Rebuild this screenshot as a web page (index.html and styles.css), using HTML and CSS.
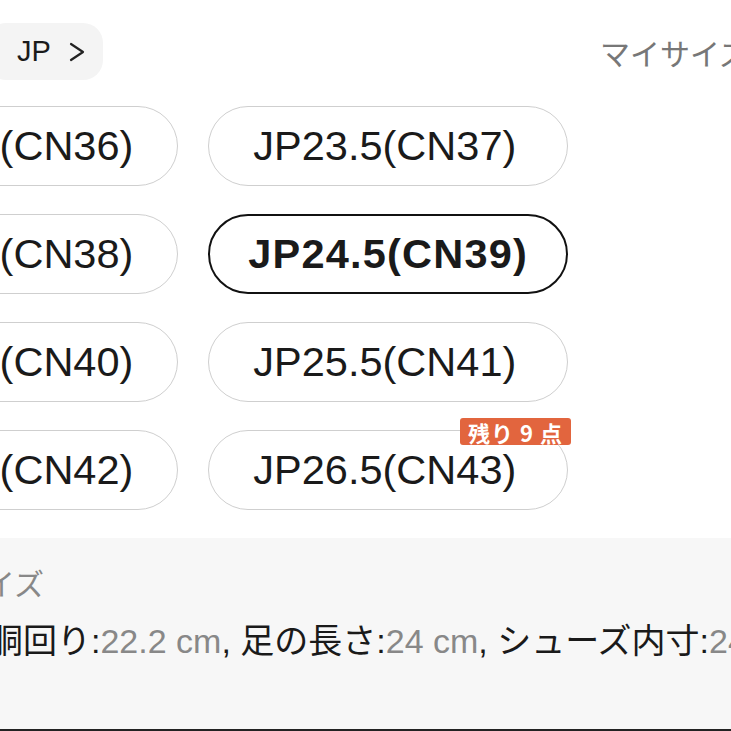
FILE: index.html
```html
<!DOCTYPE html>
<html lang="ja">

<head>
    <meta charset="UTF-8">
    <meta name="viewport" content="width=device-width, initial-scale=1.0">
    <title>サイズ選択</title>
    <link rel="stylesheet" href="styles.css">
</head>

<body>
    <div class="page">
        <div class="header">
            <div class="region">
                <span>JP</span>
                <svg class="chev" width="16" height="20" viewBox="0 0 16 20">
                    <polyline points="2,2 14,10 2,18" fill="none" stroke="#222" stroke-width="2.2" stroke-linecap="round" stroke-linejoin="round" />
                </svg>
            </div>
            <div class="my-size">マイサイズ</div>
        </div>

        <div class="sizes">
            <div class="size">JP23(CN36)</div>
            <div class="size">JP23.5(CN37)</div>
            <div class="size">JP24(CN38)</div>
            <div class="size active">JP24.5(CN39)</div>
            <div class="size">JP25(CN40)</div>
            <div class="size">JP25.5(CN41)</div>
            <div class="size">JP26(CN42)</div>
            <div class="size">JP26.5(CN43)<span class="badge">残り 9 点</span></div>
        </div>

        <div class="info">
            <div class="info-title">マイサイズ</div>
            <div class="info-line">
                胴回り:<span class="val">22.2 cm</span>, 足の長さ:<span class="val">24 cm</span>, シューズ内寸:<span class="val">24 cm</span>
            </div>
        </div>
    </div>
</body>

</html>
```

FILE: styles.css
```css
html,
body {
    margin: 0;
    height: 100%;
    overflow: hidden;
    background: #fff;
}

body {
    font-family: "Liberation Sans", "Noto Sans CJK JP", sans-serif;
    color: #1a1a1a;
}

.page {
    height: 100vh;
    display: flex;
    flex-direction: column;
    padding-top: 23px;
    box-sizing: border-box;
}

.header {
    display: grid;
    grid-template-columns: 600px max-content;
    align-items: center;
    white-space: nowrap;
}

.region {
    justify-self: start;
    display: flex;
    align-items: center;
    gap: 18px;
    height: 57px;
    margin-left: -14px;
    padding: 0 18px 0 31px;
    border-radius: 20px;
    background: #f4f4f4;
    font-size: 29px;
}

.chev {
    display: block;
}

.my-size {
    font-family: "Noto Sans CJK JP", sans-serif;
    font-size: 30px;
    color: #777;
}

.sizes {
    display: grid;
    grid-template-columns: max-content max-content;
    column-gap: 30px;
    row-gap: 28px;
    margin-top: 26px;
    margin-left: -140px;
}

.size {
    position: relative;
    height: 80px;
    box-sizing: border-box;
    padding: 0 44px;
    display: flex;
    align-items: center;
    border: 1.5px solid #cfcfcf;
    border-radius: 40px;
    font-size: 41.5px;
    white-space: nowrap;
}

.size.active {
    border: 2.5px solid #111;
    font-weight: bold;
    letter-spacing: 1.2px;
    padding: 0 38px;
}

.badge {
    position: absolute;
    top: -13px;
    right: -4px;
    height: 27px;
    padding: 0 8px;
    display: flex;
    align-items: center;
    border-radius: 3px;
    background: #e2653e;
    color: #fff;
    font-family: "Noto Sans CJK JP", sans-serif;
    font-size: 22px;
    font-weight: bold;
    letter-spacing: 1px;
}

.info {
    flex: 1;
    margin-top: 28px;
    padding-top: 25px;
    background: #f7f7f7;
    border-bottom: 2px solid #222;
    white-space: nowrap;
}

.info-title {
    color: #888;
    font-size: 30px;
    margin-left: -105px;
    line-height: 44px;
}

.info-line {
    margin-top: 12px;
    margin-left: -11px;
    font-size: 34px;
    line-height: 44px;
    color: #1a1a1a;
}

.val {
    color: #888;
}
```
